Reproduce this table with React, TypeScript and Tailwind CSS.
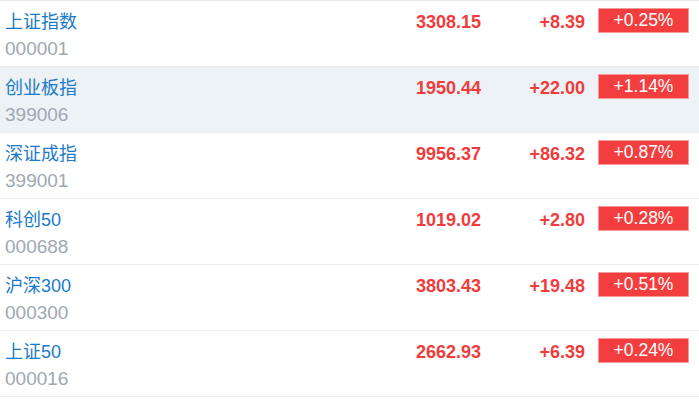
import React from "react";

const rows = [
  { name: "上证指数", code: "000001", price: "3308.15", change: "+8.39", pct: "+0.25%" },
  { name: "创业板指", code: "399006", price: "1950.44", change: "+22.00", pct: "+1.14%" },
  { name: "深证成指", code: "399001", price: "9956.37", change: "+86.32", pct: "+0.87%" },
  { name: "科创50", code: "000688", price: "1019.02", change: "+2.80", pct: "+0.28%" },
  { name: "沪深300", code: "000300", price: "3803.43", change: "+19.48", pct: "+0.51%" },
  { name: "上证50", code: "000016", price: "2662.93", change: "+6.39", pct: "+0.24%" },
];

export default function App() {
  return (
    <div
      className="w-[699px] h-[400px] bg-white border-t border-[#e6e8ec]"
      style={{ fontFamily: '"Liberation Sans", Arial, "Noto Sans CJK SC", sans-serif' }}
    >
      {rows.map((r, i) => (
        <div
          key={r.code}
          className={`flex items-start h-[66px] border-b border-[#ebedf0] pt-[8px] ${i === 1 ? "bg-[#edf2f7]" : "bg-white"}`}
        >
          <div className="flex-1 pl-[5px]">
            <div className="text-[18px] leading-[27px] text-[#1a7ac8]">{r.name}</div>
            <div className="text-[19px] leading-[26px] text-[#a0a8b2]">{r.code}</div>
          </div>
          <div className="w-[120px] text-right text-[18px] leading-[27px] font-bold text-[#f03c3c]">{r.price}</div>
          <div className="w-[104px] text-right text-[18px] leading-[27px] font-bold text-[#f03c3c]">{r.change}</div>
          <div className="ml-[13px] mr-[10px] -mt-[1px] w-[91px] h-[25px] flex items-center justify-center bg-[#f23e3e] border border-[#f59a9a] text-white text-[17.5px]">
            {r.pct}
          </div>
        </div>
      ))}
    </div>
  );
}
